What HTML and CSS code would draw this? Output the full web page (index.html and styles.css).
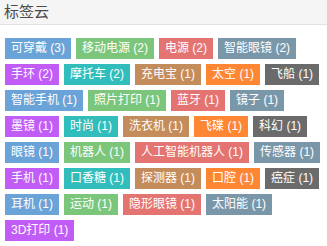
FILE: index.html
```html
<!DOCTYPE html>
<html lang="zh-CN">
<head>
<meta charset="utf-8">
<title>标签云</title>
<link rel="stylesheet" href="styles.css">
</head>
<body>
<div class="panel">
  <div class="panel-head">标签云</div>
  <div class="tags">
    <a class="tag c-blue">可穿戴 (3)</a>
    <a class="tag c-green">移动电源 (2)</a>
    <a class="tag c-red">电源 (2)</a>
    <a class="tag c-slate">智能眼镜 (2)</a>
    <a class="tag c-purple">手环 (2)</a>
    <a class="tag c-teal">摩托车 (2)</a>
    <a class="tag c-brown">充电宝 (1)</a>
    <a class="tag c-orange">太空 (1)</a>
    <a class="tag c-gray">飞船 (1)</a>
    <a class="tag c-blue">智能手机 (1)</a>
    <a class="tag c-green">照片打印 (1)</a>
    <a class="tag c-red">蓝牙 (1)</a>
    <a class="tag c-slate">镜子 (1)</a>
    <a class="tag c-purple">墨镜 (1)</a>
    <a class="tag c-teal">时尚 (1)</a>
    <a class="tag c-brown">洗衣机 (1)</a>
    <a class="tag c-orange">飞碟 (1)</a>
    <a class="tag c-gray">科幻 (1)</a>
    <a class="tag c-blue">眼镜 (1)</a>
    <a class="tag c-green">机器人 (1)</a>
    <a class="tag c-red">人工智能机器人 (1)</a>
    <a class="tag c-slate">传感器 (1)</a>
    <a class="tag c-purple">手机 (1)</a>
    <a class="tag c-teal">口香糖 (1)</a>
    <a class="tag c-brown">探测器 (1)</a>
    <a class="tag c-orange">口腔 (1)</a>
    <a class="tag c-gray">癌症 (1)</a>
    <a class="tag c-blue">耳机 (1)</a>
    <a class="tag c-green">运动 (1)</a>
    <a class="tag c-red">隐形眼镜 (1)</a>
    <a class="tag c-slate">太阳能 (1)</a>
    <a class="tag c-purple">3D打印 (1)</a>
  </div>
</div>
</body>
</html>
```

FILE: styles.css
```css
html, body {
  margin: 0;
  padding: 0;
  background: #ffffff;
}

body {
  font-family: "Liberation Sans", "Noto Sans CJK SC", sans-serif;
  width: 327px;
  height: 246px;
  overflow: hidden;
}

.panel-head {
  height: 24px;
  line-height: 24px;
  padding: 0 4px;
  background: #f5f5f5;
  border-bottom: 1px solid #e3e3e3;
  color: #4a4a4a;
  font-size: 15px;
}

.tags {
  display: flex;
  flex-wrap: wrap;
  gap: 5px 5px;
  padding: 13px 2px 0 5px;
}

.tag {
  display: block;
  height: 21px;
  line-height: 21px;
  padding: 0 6px;
  color: #ffffff;
  font-size: 12px;
  white-space: nowrap;
  text-decoration: none;
}

.c-blue { background: #6aa3d7; }
.c-green { background: #7bc67b; }
.c-red { background: #e37471; }
.c-slate { background: #7a97a9; }
.c-purple { background: #c15cf6; }
.c-teal { background: #31bdbb; }
.c-brown { background: #c58c5b; }
.c-orange { background: #ff8633; }
.c-gray { background: #6b6b6b; }
```
